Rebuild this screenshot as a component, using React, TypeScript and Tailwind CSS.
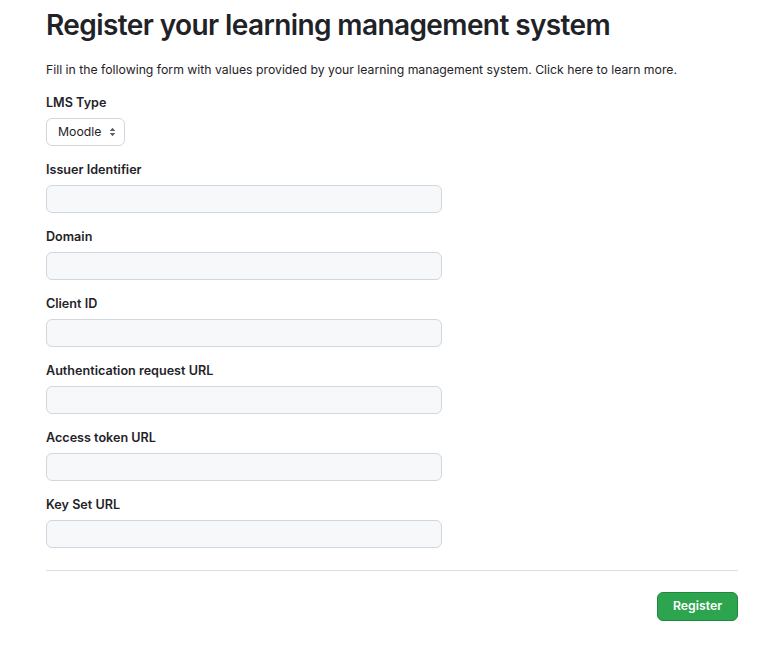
const fields = [
  'Issuer Identifier',
  'Domain',
  'Client ID',
  'Authentication request URL',
  'Access token URL',
  'Key Set URL',
];

function Field({ label }: { label: string }) {
  return (
    <div className="mt-[15px] flex flex-col">
      <label className="text-[12.6px] leading-[18px] font-semibold text-[#1f2328]">{label}</label>
      <input
        type="text"
        className="mt-[6px] h-[28px] w-[396px] rounded-[6px] border border-[#d0d7de] bg-[#f6f8fa] px-3 text-[12.25px] outline-none"
      />
    </div>
  );
}

export default function App() {
  return (
    <div className="min-h-[648px] bg-white px-[46px] font-['Inter',sans-serif] text-[#1f2328]">
      <h1 className="pt-[7px] text-[28px] leading-[36px] font-semibold tracking-[-0.6px]">
        Register your learning management system
      </h1>
      <p className="mt-[18px] text-[12.25px] leading-[18px]">
        Fill in the following form with values provided by your learning management system. Click here to learn more.
      </p>
      <div className="mt-[15px] flex flex-col">
        <label className="text-[12.6px] leading-[18px] font-semibold">LMS Type</label>
        <div className="mt-[6px] flex">
          <div className="flex h-[28px] w-[79px] items-center justify-between rounded-[6px] border border-[#d0d7de] bg-white pr-[8px] pl-[11px] text-[12.25px]">
            <span>Moodle</span>
            <svg width="7" height="10" viewBox="0 0 7 10" fill="#57606a">
              <path d="M3.5 0.8 L6.3 4 L0.7 4 Z" />
              <path d="M3.5 9.2 L6.3 6 L0.7 6 Z" />
            </svg>
          </div>
        </div>
      </div>
      {fields.map((f) => (
        <Field key={f} label={f} />
      ))}
      <div className="mt-[22px] border-t border-[#d8dee4]" />
      <div className="mt-[21px] flex justify-end">
        <button className="h-[29px] w-[81px] rounded-[6px] border border-[#1f883d] bg-[#2da44e] text-[12.25px] font-semibold text-white">
          Register
        </button>
      </div>
    </div>
  );
}
